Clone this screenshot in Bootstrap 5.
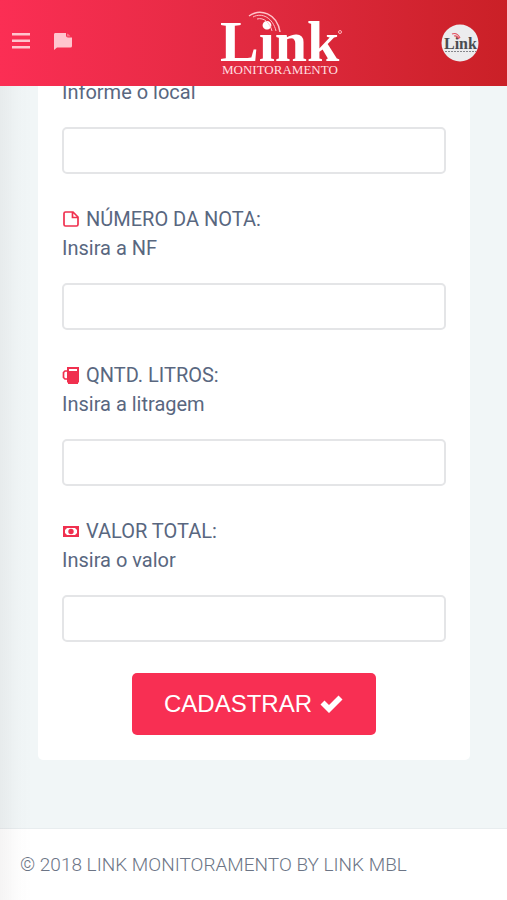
<!DOCTYPE html>
<html lang="pt-BR">
<head>
<meta charset="utf-8">
<meta name="viewport" content="width=device-width, initial-scale=1">
<title>Link Monitoramento</title>
<link href="https://cdn.jsdelivr.net/npm/bootstrap@5.3.0/dist/css/bootstrap.min.css" rel="stylesheet">
<style>
body { background: #f1f6f7; color: #59677f; font-family: Roboto, "Liberation Sans", sans-serif; font-size: 20px; line-height: 29px; }
/* soft shadow of the closed side menu */
body::before { content: ""; position: fixed; inset: 0 auto 0 0; width: 32px; z-index: 5; pointer-events: none; background: linear-gradient(90deg, rgba(60,40,40,.05), rgba(60,40,40,.01) 60%, rgba(60,40,40,0)); }
.topbar { height: 86px; background: linear-gradient(90deg, #fb2e54, #e12a40 50%, #ca2027); }
.topbar button, .topbar a { line-height: 0; }
.topbar-actions { padding-bottom: 4px; }
.form-panel { margin: 0 37px 68px 38px; padding: 78px 24px 25px; border-radius: 0 0 5px 5px; }
.field { margin-bottom: 31px; }
.field label { margin-bottom: 20px; }
.field .form-control { height: 47px; border: 2px solid #e4e5e7; border-radius: 5px; }
.field-icon { width: 18px; height: 18px; margin-right: 6px; color: #f0304f; }
.btn-send { width: 244px; height: 62px; background: #f82f53; color: #fff; border-radius: 5px; font-family: "Liberation Sans", sans-serif; font-size: 24px; }
.btn-send:hover { background: #df2647; color: #fff; }
.page-foot { padding: 21px 20px; border-top: 1px solid #e8edef; color: #6c7586; font-size: 19px; }
</style>
<script src="https://cdn.jsdelivr.net/npm/bootstrap@5.3.0/dist/js/bootstrap.bundle.min.js"></script>
</head>
<body class="d-flex flex-column min-vh-100">
<header class="topbar fixed-top d-flex align-items-center justify-content-between px-2">
  <div class="topbar-actions d-flex gap-3">
    <button type="button" class="btn p-1 border-0" aria-label="Menu">
      <svg width="18" height="18" viewBox="0 0 18 18" fill="#ffc5ce"><path d="M0 1h18v2.500H0zM0 7.500h18V10H0zM0 14h18v2.500H0z"/></svg>
    </button>
    <button type="button" class="btn p-1 border-0" aria-label="Mensagens">
      <svg width="18" height="18" viewBox="0 0 18 18" fill="#ffc5ce"><path d="M1 1H12v2.500q0 2 2 2h4V14q0 1.500-1.500 1.500H3L0 18V2.500Q0 1 1 1z"/><path d="M13 1.500q2 .5 3.500 3H13z" opacity=".45"/></svg>
    </button>
  </div>
  <a class="ms-5" href="#" aria-label="Link Monitoramento">
    <svg width="126" height="68" viewBox="0 0 126 68" fill="#fff">
      <text x="1" y="52" font-family="Liberation Serif, serif" font-weight="700" font-size="58">Link</text>
      <text x="3" y="65" font-family="Liberation Serif, serif" font-size="13" fill="#ffdfe0">MONITORAMENTO</text>
      <g fill="none" stroke="#ffc2c8" stroke-width="1.500"><path d="M30 7C41-1 58 4 61 23"/><path d="M34 8C43 3 54 9 57 22" stroke-width="1"/><path d="M38 10c7-2 13 4 15 12" stroke-width="1"/></g>
      <circle cx="121" cy="23" r="1.500" fill="none" stroke="#ffb6bb"/>
    </svg>
  </a>
  <a href="#" class="me-3" aria-label="Perfil">
    <svg width="44" height="38" viewBox="0 0 44 38">
      <circle cx="21" cy="19" r="18.500" fill="#ececee"/>
      <text x="5" y="25" font-family="Liberation Serif, serif" font-weight="700" font-size="16" fill="#4a4b50">Link</text>
      <path d="M13 10q5-2 8 4M15 12q3-1 5 3" fill="none" stroke="#e44d5c" stroke-width="1.200"/>
      <path d="M6 27.500h31" stroke="#85868b" stroke-dasharray="2 1"/>
    </svg>
  </a>
</header>

<main class="flex-grow-1">
  <form class="form-panel bg-white" onsubmit="return false">
    <div class="field">
      <label class="d-block" for="local">Informe o local</label>
      <input class="form-control" id="local" type="text">
    </div>
    <div class="field">
      <label class="d-block" for="nota"><span class="d-flex align-items-center"><svg class="field-icon" viewBox="0 0 18 18" fill="none" stroke="currentColor" stroke-width="1.700"><path d="M11 1H3.500Q2 1 2 2.500v11Q2 15 3.500 15h11q1.500 0 1.500-1.500V6zM10.500 1v5.500H16"/></svg>NÚMERO DA NOTA:</span>Insira a NF</label>
      <input class="form-control" id="nota" type="text">
    </div>
    <div class="field">
      <label class="d-block" for="litros"><span class="d-flex align-items-center"><svg class="field-icon" viewBox="0 0 18 18" fill="currentColor"><path fill-rule="evenodd" d="M5 0h12v15.500h-1V17H6v-1.500H5zM7 2v2h8V2z"/><path d="M5 4H3L1.500 5.500v5L3 12h2" fill="none" stroke="currentColor" stroke-width="1.700"/></svg>QNTD. LITROS:</span>Insira a litragem</label>
      <input class="form-control" id="litros" type="text" inputmode="decimal">
    </div>
    <div class="field">
      <label class="d-block" for="valor"><span class="d-flex align-items-center"><svg class="field-icon" viewBox="0 0 18 18" fill="currentColor"><path fill-rule="evenodd" d="M1 3h16v11H1zM5 5L3 7v3l2 2h8l2-2V7l-2-2z"/><circle cx="9" cy="8.500" r="2.700"/></svg>VALOR TOTAL:</span>Insira o valor</label>
      <input class="form-control" id="valor" type="text" inputmode="decimal">
    </div>
    <div class="text-center">
      <button type="submit" class="btn btn-send d-inline-flex align-items-center justify-content-center gap-2 border-0">CADASTRAR
        <svg width="24" height="18" viewBox="0 0 23 18" fill="#fff"><path d="M0 9.500L4 5.500 8.500 10 18 0.500 22 4.500 8.500 18z"/></svg>
      </button>
    </div>
  </form>
</main>
<footer class="page-foot fw-light bg-white">© 2018 LINK MONITORAMENTO BY LINK MBL</footer>
</body>
</html>
